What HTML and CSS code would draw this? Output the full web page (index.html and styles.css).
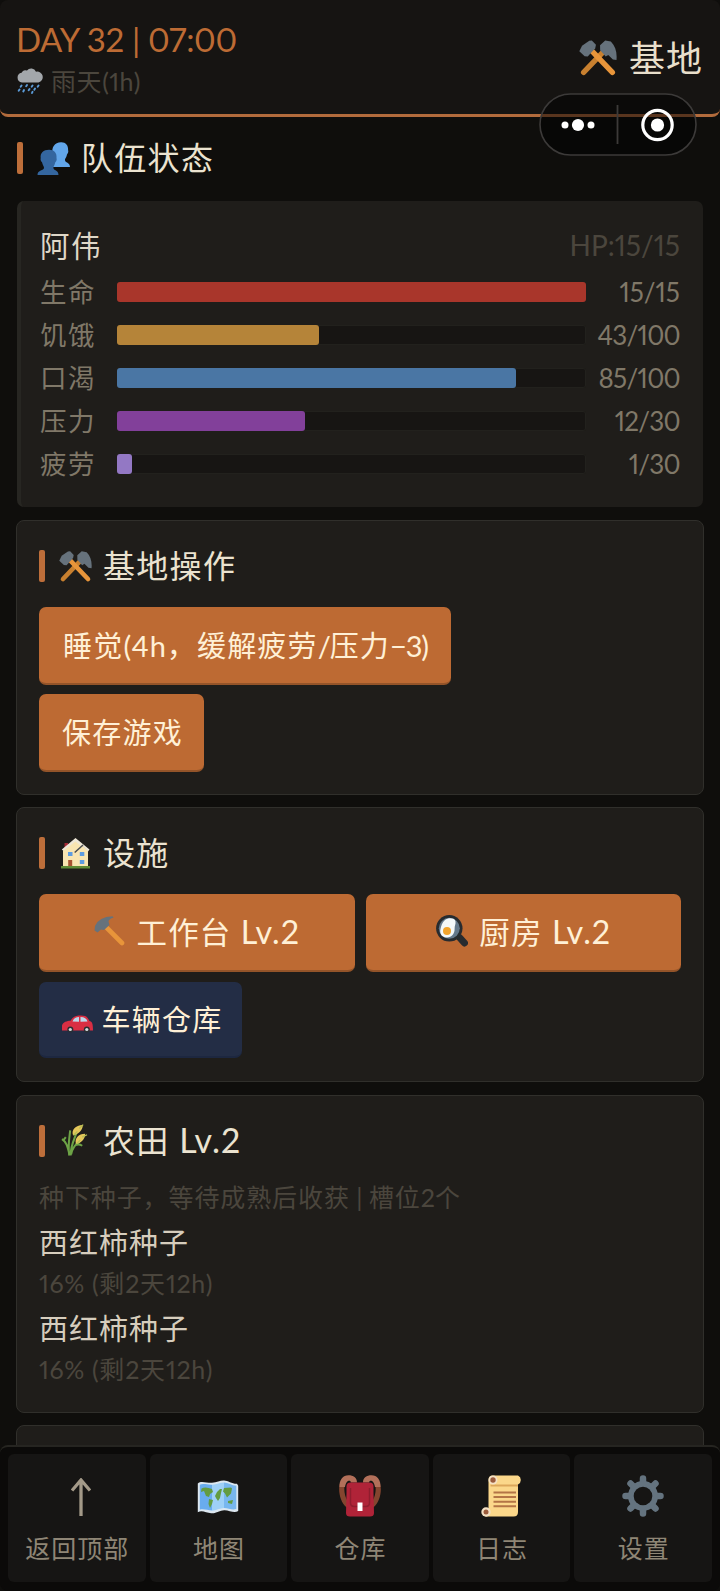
FILE: index.html
```html
<!DOCTYPE html>
<html lang="zh-CN">
<head>
<meta charset="utf-8">
<title>基地</title>
<link rel="stylesheet" href="styles.css">
</head>
<body>
<svg class="defs" width="0" height="0" aria-hidden="true">
  <symbol id="i-tools" viewBox="0 0 37 35">
    <path d="M4.500 31.500 25 10" stroke="#c8802f" stroke-width="5.200" stroke-linecap="round"/>
    <path d="M32.500 31.500 12 10" stroke="#e8953a" stroke-width="5.200" stroke-linecap="round"/>
    <path d="M.3 11 3 5.500 10 .8 12.500.4 16.500 4.500 15.800 8 8.500 16 5.500 15.800Z" fill="#66727c"/>
    <path d="M20.500 5 25.500.5 31 1.500C35.500 6 37.200 12 36.500 19.500L33 19 28.500 14.500 26 16 20.600 10Z" fill="#66727c"/>
  </symbol>
  <symbol id="i-rain" viewBox="0 0 27 26">
    <path d="M5 14.500A4.900 4.900 0 0 1 4.600 4.800 4 4 0 0 1 10 2.600 5.200 5.200 0 0 1 19 3.700 5.400 5.400 0 1 1 21.500 14.500Z" fill="#a3a7ab"/>
    <path d="m4.500 17.500-.8 1.200M10 17l-.8 1.200M15.500 17.500l-.8 1.200M21.500 17.500l-.8 1.200M2.500 21.500l-.8 1.200M7 22l-.7 1.500M12.500 21l-.8 1.200M18 20.500l-.7 1.200M15.500 23.800l-.5 1.200" stroke="#5b9bd8" stroke-width="1.900" stroke-linecap="round"/>
  </symbol>
  <symbol id="i-people" viewBox="0 0 32 33">
    <path d="M23.500.2C28 0 31 3.200 30.600 8c.6 2-.2 3.500-1.100 4.400-.8 3.500-2 4-2 5.500 0 3 5 2 5 7.100H14L15 12C14 5 17 .5 23.500.2Z" fill="#62a6ea"/>
    <path d="M11.500 7.800C16.500 7.700 19.600 11 19 16c.6 1.800-.2 3.300-1.200 4.200-.7 3.300-1.900 4-1.900 5.500 0 3 5.100 2 5.100 7.300H0c0-5.300 6.500-4.300 6.500-7.300 0-1.500-1.200-2.200-2-5.500-1-.9-1.800-2.400-1.300-4.200C2.500 11 6 7.900 11.500 7.800Z" fill="#34669f"/>
  </symbol>
  <symbol id="i-house" viewBox="0 0 29 31">
    <path d="M3.500 5h3.600v7H3.500z" fill="#a52a35"/>
    <path d="M2 12.500 14.500 2 27 12.500V28H2z" fill="#f8e5b1"/>
    <path d="M14.500 0 28.500 11.500 27 13.500 21.500 8 14 15 2 12.500.8 11.500Z" fill="#eee8d8"/>
    <path d="M2 13 14.500 3.500 20.500 8.500 14 15V28H2Z" fill="#f8e5b1"/>
    <path d="m22 7-8.300 7.500" stroke="#4a4d50" stroke-width="1.500"/>
    <path d="M7 14h4.500v4H7zM18.800 14h4.500v4h-4.500zM18.800 22h4.500v4h-4.500z" fill="#5d9ce0"/>
    <path d="M7.200 22h4v6h-4z" fill="#a65332"/>
    <path d="M0 28h29v2.500H0z" fill="#5f8c36"/>
  </symbol>
  <symbol id="i-hammer" viewBox="0 0 31 30">
    <path d="m12 11 16 16" stroke="#e8953a" stroke-width="4.600" stroke-linecap="round"/>
    <path d="M.5 14.500 1 10Q5 .8 18.500.3l1 1.500Q15 2.800 14.500 5.500l1 3.500-5.500 5-3-.5-3.500 3Z" fill="#66727c"/>
  </symbol>
  <symbol id="i-pan" viewBox="0 0 32 32">
    <path d="m24 23 4.500 5" stroke="#272b2f" stroke-width="7" stroke-linecap="round"/>
    <circle cx="13.300" cy="13.300" r="13.200" fill="#272b2f"/>
    <circle cx="13.300" cy="13.300" r="10.500" fill="#64788b"/>
    <path d="M9 5C12 2.500 19 2.500 19.500 6.500c.4 3-1 4-.9 7.500.2 5-3.600 9-8 8.500C5 22 3.500 18 4.500 14 5.300 10.500 6 7.500 9 5Z" fill="#f4f8fa"/>
    <circle cx="11" cy="16" r="4" fill="#f2a42d"/>
  </symbol>
  <symbol id="i-car" viewBox="0 0 31 18">
    <path d="M0 15.500V10.500C1 7 5 6 8.500 5.800 11 1.500 14 .5 19 .5c5 0 6.500 1.500 8.500 5.500 2.500.6 3.500 2 3.500 9.500Z" fill="#d92e43"/>
    <path d="M10.500 6.500C12 3 14 2 17 2v4.800ZM18.500 2c4 0 6 1.500 7 4.500l-7 .3Z" fill="#bdd7ea"/>
    <circle cx="8.300" cy="14.500" r="3" fill="#292f33"/><circle cx="24.800" cy="14.500" r="3" fill="#292f33"/>
    <circle cx="8.300" cy="14.500" r="1.600" fill="#d5dce0"/><circle cx="24.800" cy="14.500" r="1.600" fill="#d5dce0"/>
  </symbol>
  <symbol id="i-wheat" viewBox="0 0 28 33" fill="none">
    <path d="M9 32C7 24 6 18 1 15M8.500 32C7 20 9 12 9.500 6M10 32C10 22 13 17 16 9M10.500 31C11 26 15 20 20 17M14 22q4-3 8 0M2 17l3-4" stroke="#6da346" stroke-width="2.100"/>
    <path d="M12.500 11C10.500 6 15 .500 22.500.500 23 6 17 11 12.500 11ZM15.500 20C14 14 18 9.500 25 9.500 25.500 15 20 20 15.500 20Z" fill="#e5c75a"/>
    <path d="m19 4 4-4M22 13l5-2.500M13 11l4-4M16 20l4-4" stroke="#b5bd55" stroke-width="1.300"/>
  </symbol>
  <symbol id="i-map" viewBox="0 0 42 34">
    <path d="M.8 3.500C4 .2 10 3.200 15 2.800 20 2.500 23 .4 27 .5c4 .1 8 3.500 13 3.300l1.200 2V31c-4 3-9-1-14-.8-4.500 0-8 3.500-13 3-5-.2-9-3.500-13.400-1Z" fill="#dce7f0"/>
    <path d="M2.800 4.700C6 3 11 5 15 4.700V30.500c-4 0-9-2-12.200-.8Z" fill="#69acee"/>
    <path d="M15 4.700c5 0 8-2.200 12-2.200V28c-4 0-8 2.700-12 2.700Z" fill="#9ed0f7"/>
    <path d="M27 2.500c4 0 8 3.300 12.300 3.200V29c-4 1.500-8-1-12.300-1Z" fill="#78b7ef"/>
    <path d="M4.500 8.500c3-2 7-1 10.500.5l1 3-3 2-1 3-3-1-2-5-3 1ZM12 19l4 1-1 4-2 4-1.500-4ZM18 16l2-4 3-3 2 0-1 4-1 5-2 3-2-3ZM27 8l7-.5 1 1-1 5-4 4-2-4-2-2ZM31 21l5-1-1 4-4-1Z" fill="#639c41"/>
  </symbol>
  <symbol id="i-pack" viewBox="0 0 42 42">
    <path d="M6 3C1 6-.3 11 .3 17 1 24 4 30 8.500 33V26C5.500 21 4.500 14 6 9ZM36 3c5 3 6.300 8 5.700 14C41 24 38 30 33.500 33V26C36.500 21 37.500 14 36 9Z" fill="#84452f"/>
    <path d="M.5 12C0 5 4 .3 9.500.3c4.800 0 8.500 2.500 8.500 7.200h-6C11.500 4.500 7 5 6 12ZM41.500 12C42 5 38 .3 32.500.3c-4.800 0-8.500 2.500-8.500 7.200h6c.5-3 5-2.500 6 4.500Z" fill="#b3705a"/>
    <path d="M7.500 18V11.500q0-4 4-4h19q4 0 4 4v6.500l.5 20q0 3.500-4 3.500H11q-4 0-4-3.500Z" fill="#b02338"/>
    <path d="M11.500 13v15q0 3.500 4 3.500h11q4 0 4-3.500V13" fill="none" stroke="#8f1d2e" stroke-width="1.500"/>
    <path d="M18.500 27.500h5v8.500h-5z" fill="#fff"/>
  </symbol>
  <symbol id="i-scroll" viewBox="0 0 42 42">
    <path d="M11.500.5H37a5 5 0 0 1 0 9V37q0 4.500-4.500 4.500H4.500V33l3 .5V5Q7.500.5 11.500.5Z" fill="#fbd78a"/>
    <path d="M9.500 9.500H37v2H9.500z" fill="#dca75b"/>
    <circle cx="12" cy="5" r="4.500" fill="#f4e1c5"/><circle cx="12" cy="5" r="2.700" fill="#9b5c3d"/>
    <circle cx="5" cy="37" r="4.700" fill="#f4e1c5"/><circle cx="5" cy="37" r="2.500" fill="#9b5c3d"/>
    <path d="M12.500 17.500h22.500M12.500 22h22.500M12.500 26.700h22.500M12.500 31.300h22.500" stroke="#b37446" stroke-width="1.900"/>
  </symbol>
  <symbol id="i-gear" viewBox="-21 -21 42 42">
    <g stroke="#64737f" stroke-width="6.500" stroke-linecap="round"><path d="M0-17.500V17.500M-17.500 0H17.500M-12.500-12.500 12.500 12.500M12.500-12.500-12.500 12.500"/></g>
    <circle r="15" fill="#64737f"/><circle r="9.300" fill="#161514"/>
  </symbol>
  <symbol id="i-up" viewBox="0 0 20 38"><path d="M10 38V2M1 12.500 10 2l9 10.500" fill="none" stroke="#a39988" stroke-width="3.300"/></symbol>
</svg>

<header class="topbar">
  <div class="clock">
    <div class="day">DAY 32 | 07:00</div>
    <div class="weather"><svg class="ic-rain"><use href="#i-rain"/></svg><span>雨天<span class="n">(1h)</span></span></div>
  </div>
  <div class="place"><svg class="ic-place"><use href="#i-tools"/></svg><span>基地</span></div>
  <div class="capsule">
    <svg width="158" height="63" viewBox="0 0 158 63">
      <rect x="1" y="1" width="156" height="61" rx="30.500" fill="rgba(0,0,0,.5)" stroke="#3c3a39" stroke-width="1.600"/>
      <path d="M78.500 12v39" stroke="#3c3a39" stroke-width="1.800"/>
      <g fill="#fff"><circle cx="26" cy="32" r="3.500"/><circle cx="39" cy="32" r="6.100"/><circle cx="52" cy="32" r="3.500"/><circle cx="118.500" cy="32" r="6.600"/></g>
      <circle cx="118.500" cy="32" r="14.700" fill="none" stroke="#fff" stroke-width="3.200"/>
    </svg>
  </div>
</header>

<main class="page">
  <h2 class="title title-top"><i></i><svg><use href="#i-people"/></svg><span>队伍状态</span></h2>

  <section class="member">
    <div class="member-head"><span class="name">阿伟</span><span class="hp">HP:15/15</span></div>
    <div class="stat"><span>生命</span><div class="track"><div class="fill life" style="width:100%"></div></div><b class="short">15/15</b></div>
    <div class="stat"><span>饥饿</span><div class="track"><div class="fill food" style="width:43%"></div></div><b>43/100</b></div>
    <div class="stat"><span>口渴</span><div class="track"><div class="fill water" style="width:85%"></div></div><b>85/100</b></div>
    <div class="stat"><span>压力</span><div class="track"><div class="fill stress" style="width:40%"></div></div><b>12/30</b></div>
    <div class="stat"><span>疲劳</span><div class="track"><div class="fill tired" style="width:3.200%"></div></div><b>1/30</b></div>
  </section>

  <section class="card">
    <h2 class="title"><i></i><svg><use href="#i-tools"/></svg><span>基地操作</span></h2>
    <div class="buttons stacked">
      <button class="btn sleep"><span>睡觉<span class="n">(4h</span>，缓解疲劳<span class="n tail">/</span>压力<span class="n tail">−3)</span></span></button>
      <button class="btn save">保存游戏</button>
    </div>
  </section>

  <section class="card">
    <h2 class="title"><i></i><svg class="ic-house"><use href="#i-house"/></svg><span>设施</span></h2>
    <div class="buttons">
      <button class="btn half"><svg class="ic-hammer"><use href="#i-hammer"/></svg><span>工作台<span class="lv"> Lv.2</span></span></button>
      <button class="btn half"><svg class="ic-pan"><use href="#i-pan"/></svg><span>厨房<span class="lv"> Lv.2</span></span></button>
      <button class="btn blue"><svg class="ic-car"><use href="#i-car"/></svg><span>车辆仓库</span></button>
    </div>
  </section>

  <section class="card farm">
    <h2 class="title"><i></i><svg class="ic-wheat"><use href="#i-wheat"/></svg><span>农田<span class="lv"> Lv.2</span></span></h2>
    <p class="desc">种下种子，等待成熟后收获<span class="n"> | </span>槽位<span class="n">2</span>个</p>
    <p class="crop">西红柿种子</p>
    <p class="left"><span class="n">16% (</span>剩<span class="n">2</span>天<span class="n">12h)</span></p>
    <p class="crop">西红柿种子</p>
    <p class="left"><span class="n">16% (</span>剩<span class="n">2</span>天<span class="n">12h)</span></p>
  </section>

  <section class="card peek"></section>
</main>

<nav class="tabs">
  <a class="tab"><svg class="ic-up"><use href="#i-up"/></svg><span>返回顶部</span></a>
  <a class="tab"><svg class="ic-map"><use href="#i-map"/></svg><span>地图</span></a>
  <a class="tab"><svg><use href="#i-pack"/></svg><span>仓库</span></a>
  <a class="tab"><svg><use href="#i-scroll"/></svg><span>日志</span></a>
  <a class="tab"><svg><use href="#i-gear"/></svg><span>设置</span></a>
</nav>
</body>
</html>
```
FILE: styles.css
```css
* { box-sizing: border-box; margin: 0; padding: 0; }
html { background: #000; }
body {
  width: 720px; height: 1591px; overflow: hidden;
  display: flex; flex-direction: column;
  background: #0f0e0c;
  font-family: Lato, "Noto Sans CJK SC", sans-serif;
  font-weight: 400; letter-spacing: 1px;
  font-variant-numeric: proportional-nums;
}
svg { display: block; flex: none; }
.defs { position: absolute; }
.n { letter-spacing: 0; white-space: pre; }
.lv { font-size: 1.060em; letter-spacing: 1px; white-space: pre; }

.topbar {
  position: relative; flex: none; height: 117px;
  display: flex; justify-content: space-between;
  padding: 19px 17px 0;
  background: #161412; border-bottom: 3px solid #b26b3c; border-radius: 8px;
}
.day { height: 39px; margin-left: -1px; line-height: 40px; font-size: 33px; letter-spacing: -.35px; color: #bd6b34; }
.weather { display: flex; align-items: center; gap: 7px; height: 46px; font-size: 25px; line-height: 44px; color: #4b463d; letter-spacing: .6px; }
.weather .n { letter-spacing: .3px; }
.ic-rain { width: 27px; height: 26px; }
.place { display: flex; align-items: center; gap: 12px; height: 78px; font-size: 36px; line-height: 44px; color: #e8dfcb; }
.ic-place { width: 38px; height: 36px; }
.capsule { position: absolute; left: 539px; top: 93px; }

.page { flex: 1; min-height: 0; overflow: hidden; padding: 0 16px; }
.title { display: flex; align-items: center; height: 32px; font-size: 32px; line-height: 32px; font-weight: 400; letter-spacing: 1.300px; color: #ebe3d0; }
.title i { width: 6px; height: 32px; border-radius: 2px; background: #bd6e3a; margin-right: 14px; }
.title svg { width: 33px; height: 33px; }
.title span { white-space: pre; }
.title > span { margin-left: 11px; }
.title-top { margin: 25px 0 27px 1px; }

.member {
  height: 306px; margin-left: 1px; width: 686px; padding: 24px 23px 0 19px;
  background: #1f1d1a; border-left: 4px solid #272622; border-radius: 7px;
}
.member-head { display: flex; justify-content: space-between; height: 45px; line-height: 41px; }
.name { font-size: 29.500px; letter-spacing: 1.500px; color: #dfd7c7; }
.hp { font-size: 28px; letter-spacing: 0; color: #4b463d; }
.stat { display: flex; align-items: center; height: 43.100px; font-size: 26.500px; line-height: 43px; color: #807868; letter-spacing: 1.500px; }
.stat > span { width: 77px; padding-top: 1px; }
.stat b { flex: 1; padding-top: 1px; text-align: right; font-weight: 400; font-size: 26px; letter-spacing: -.7px; }
.stat .short { letter-spacing: 0; }
.track { width: 469px; height: 20px; background: #171513; border-radius: 3px; box-shadow: inset 0 0 0 1px #22211d; }
.fill { height: 100%; border-radius: 3px; }
.life { background: #a9362b; } .food { background: #b58439; } .water { background: #4a76a4; } .stress { background: #82409a; } .tired { background: #9378c4; }

.card { height: 275px; margin-top: 12.300px; padding: 29px 22px 0; background: #1f1d1a; border: 1px solid #302f2b; border-radius: 8px; }
.member + .card { margin-top: 13px; }
.buttons { display: flex; flex-wrap: wrap; margin-top: 25px; gap: 10px 11px; }
.buttons.stacked { flex-direction: column; flex-wrap: nowrap; align-items: flex-start; gap: 9px; }
.btn {
  display: flex; align-items: center; justify-content: center; height: 78px; padding: 0 0 2px;
  background: #bd6a33; border: 0; border-bottom: 2px solid #945429; border-radius: 7px;
  font: inherit; font-size: 29px; letter-spacing: 1.200px; color: #fff0d6; white-space: pre;
}
.save { width: 165px; padding-left: 2px; }
.sleep { width: 412px; justify-content: flex-start; padding-left: 24px; }
.sleep .n { letter-spacing: .9px; }
.sleep .tail { letter-spacing: -1.200px; }
.half { width: 315.500px; font-size: 30.500px; padding-left: 1px; }
.half > span { margin-left: 11px; }
.blue { width: 203px; height: 76px; background: #232d45; border-color: #1d2740; }
.blue > span { margin-left: 9px; }
.ic-hammer { width: 31px; height: 30px; } .ic-pan { width: 32px; height: 32px; }
.ic-car { width: 31px; height: 18px; margin: 12px 0 0 3px; }
.title .ic-house { width: 29px; height: 31px; margin: 0 2px; }
.title .ic-wheat { width: 27px; height: 33px; margin: 0 4px 0 2px; }

.farm { height: 318px; }
.desc { margin-top: 19px; height: 42px; font-size: 25px; line-height: 42px; letter-spacing: .9px; color: #4b463d; }
.crop { height: 46px; line-height: 50px; font-size: 29px; color: #d6cdbd; }
.left { height: 40px; line-height: 38px; font-size: 25px; color: #4b463d; }
.left .n { letter-spacing: .6px; }
.peek { height: 60px; }

.tabs {
  flex: none; height: 146px; padding: 7px 8px 0; display: flex; gap: 4px;
  background: #0b0a09; border-top: 2px solid #262521; border-radius: 8px;
}
.tab {
  flex: 1; height: 128px; display: flex; flex-direction: column; align-items: center; justify-content: space-between;
  padding: 21px 0 16px; background: #161514; border-radius: 6px;
  font-size: 25px; line-height: 36px; color: #8f8676;
}
.tab span { padding-left: 1px; }
.tab svg { width: 42px; height: 42px; }
.tab .ic-up { width: 20px; height: 38px; margin: 3px 0 0 9px; }
.tab .ic-map { height: 34px; margin-top: 5px; }
```
